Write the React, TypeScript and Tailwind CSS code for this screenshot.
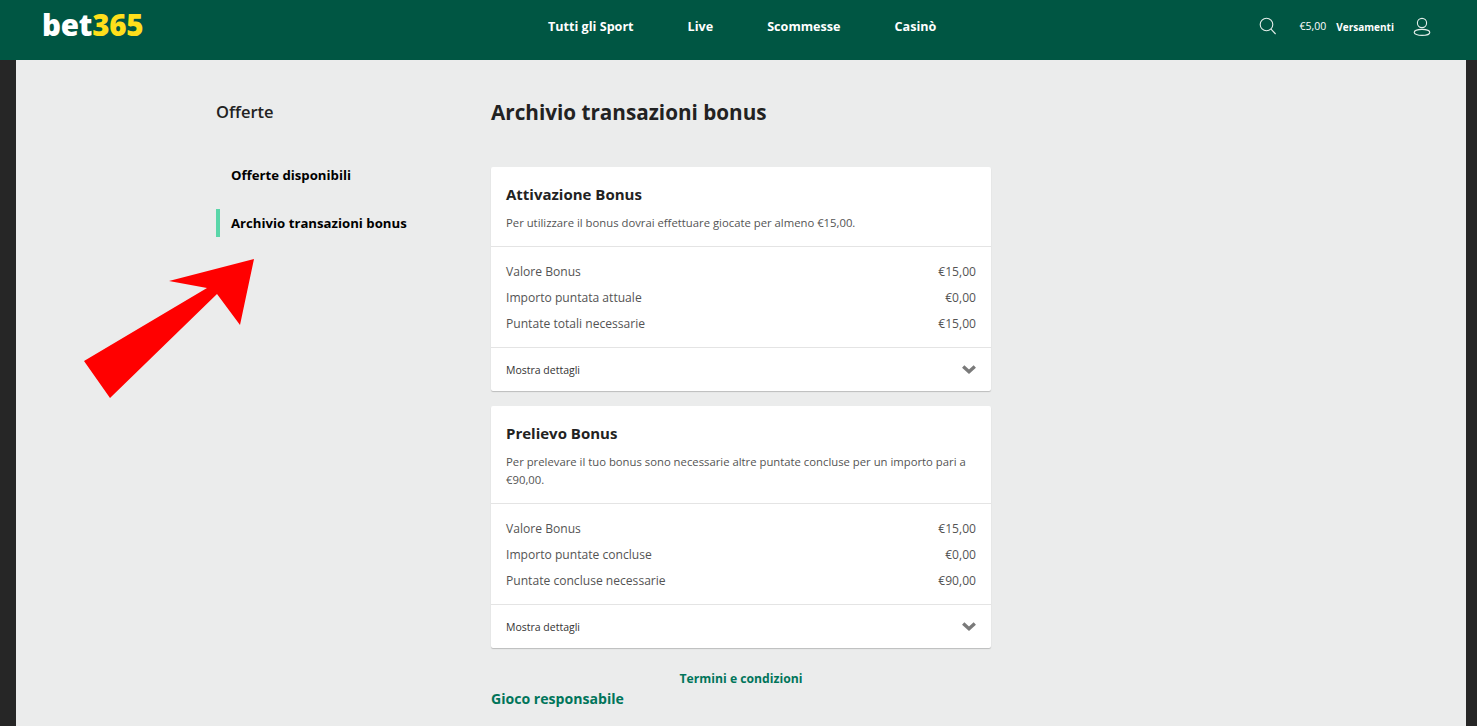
import React from "react";

const font = { fontFamily: '"Open Sans", "Noto Sans", sans-serif' };

function Row({ label, value }: { label: string; value: string }) {
  return (
    <div className="flex h-[26px] items-center justify-between text-[12.1px] text-[#545454]">
      <span>{label}</span>
      <span>{value}</span>
    </div>
  );
}

function Chevron() {
  return (
    <svg width="14" height="10" viewBox="0 0 14 10" className="block">
      <path d="M1.2 1.6 L7 6.8 L12.8 1.6" fill="none" stroke="#7a7a7a" strokeWidth="3.4" />
    </svg>
  );
}

function Card({ title, desc, rows }: { title: string; desc: React.ReactNode; rows: [string, string][] }) {
  return (
    <section className="rounded-[2px] bg-white shadow-[0_1px_1px_rgba(0,0,0,0.2)]">
      <div className="border-b border-[#e4e4e4] px-[15px] pt-[16px] pb-[14px]">
        <h2 className="text-[15px] leading-[22px] font-bold text-[#222]">{title}</h2>
        <p className="mt-[9px] text-[11.3px] leading-[18px] text-[#545454]">{desc}</p>
      </div>
      <div className="border-b border-[#e4e4e4] px-[15px] pt-[12px] pb-[10px]">
        {rows.map(([l, v]) => (
          <Row key={l} label={l} value={v} />
        ))}
      </div>
      <div className="flex h-[43px] items-center justify-between px-[15px] pt-[1px] text-[10.5px] text-[#333]">
        <span className="pt-[1px]">Mostra dettagli</span>
        <Chevron />
      </div>
    </section>
  );
}

export default function App() {
  return (
    <div className="relative flex h-screen flex-col overflow-hidden bg-[#262626]" style={font}>
      <header className="flex h-[60px] shrink-0 items-center bg-[#005643] pr-[46px] pb-[6px] pl-[42px] text-white">
        <div className="w-[506px] -translate-y-[2px] text-[29.5px] leading-none font-extrabold tracking-[-0.2px]">
          bet<span className="text-[#ffdf1b]">365</span>
        </div>
        <nav className="flex items-center gap-[54px] text-[12.6px] font-bold">
          <span>Tutti gli Sport</span>
          <span>Live</span>
          <span>Scommesse</span>
          <span>Casinò</span>
        </nav>
        <div className="ml-auto flex items-center text-[10.5px]">
          <svg width="18" height="18" viewBox="0 0 18 18" className="mr-[23px] -translate-y-[1px]" fill="none" stroke="#e4eeea" strokeWidth="1.1">
            <circle cx="7.5" cy="7.5" r="6.3" />
            <path d="M12 12.2 L16.6 17" />
          </svg>
          <span>€5,00</span>
          <span className="ml-[10px] text-[10px] font-bold">Versamenti</span>
          <svg width="18" height="20" viewBox="0 0 18 20" className="ml-[19px]" fill="none" stroke="#e4eeea" strokeWidth="1.1">
            <circle cx="9" cy="6" r="4.6" />
            <ellipse cx="9" cy="15.4" rx="7.8" ry="3" />
          </svg>
        </div>
      </header>

      <main className="mx-[16px] mr-[11px] flex min-h-0 flex-1 bg-[#ebecec] pl-[200px]">
        <aside className="w-[275px] shrink-0 pt-[41px]">
          <h2 className="text-[16.5px] leading-[22px] font-semibold text-[#222]">Offerte</h2>
          <div className="mt-[39px] flex h-[28px] items-center pl-[15px] text-[13.2px] font-bold text-black">
            Offerte disponibili
          </div>
          <div className="mt-[19px] flex h-[28px] items-center border-l-4 border-[#5ad6a9] pl-[11px] text-[13.2px] font-bold text-black">
            <span className="pt-[1px]">Archivio transazioni bonus</span>
          </div>
        </aside>
        <div className="w-[500px] shrink-0 pt-[36px]">
          <h1 className="text-[20.7px] leading-[32px] font-bold text-[#222]">Archivio transazioni bonus</h1>
          <div className="mt-[39px] flex flex-col gap-[15px]">
            <Card
              title="Attivazione Bonus"
              desc="Per utilizzare il bonus dovrai effettuare giocate per almeno €15,00."
              rows={[
                ["Valore Bonus", "€15,00"],
                ["Importo puntata attuale", "€0,00"],
                ["Puntate totali necessarie", "€15,00"],
              ]}
            />
            <Card
              title="Prelievo Bonus"
              desc="Per prelevare il tuo bonus sono necessarie altre puntate concluse per un importo pari a €90,00."
              rows={[
                ["Valore Bonus", "€15,00"],
                ["Importo puntate concluse", "€0,00"],
                ["Puntate concluse necessarie", "€90,00"],
              ]}
            />
          </div>
          <div className="mt-[22px] text-center text-[12.2px] leading-[18px] font-bold text-[#00755a]">Termini e condizioni</div>
          <div className="text-[14.1px] leading-[22px] font-bold text-[#00755a]">Gioco responsabile</div>
        </div>
      </main>

      <svg className="pointer-events-none absolute top-0 left-0" width="1477" height="726" viewBox="0 0 1477 726">
        <polygon points="254,259 169,281 207,288 84,361 110,398 217,294 240,325" fill="#ff0000" />
      </svg>
    </div>
  );
}
